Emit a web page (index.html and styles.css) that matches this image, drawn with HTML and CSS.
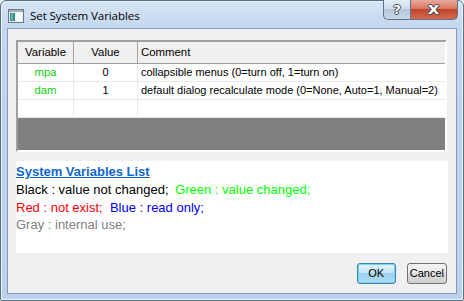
FILE: index.html
```html
<!DOCTYPE html>
<html>
<head>
<meta charset="utf-8">
<link rel="stylesheet" href="styles.css">
</head>
<body>
<div class="window">
  <div class="titlebar">
    <svg class="appicon" width="16" height="14" viewBox="0 0 16 14">
      <rect x="0.5" y="0.5" width="15" height="13" fill="#e8eef2" stroke="#6b7a86"/>
      <rect x="1" y="1" width="14" height="2" fill="#9fb0bd"/>
      <rect x="2" y="4" width="5" height="8" fill="#3f8f8a"/>
      <rect x="3" y="5" width="2" height="6" fill="#62b8b0"/>
      <rect x="8" y="4" width="6" height="8" fill="#f6f8fa"/>
    </svg>
    <span class="title">Set System Variables</span>
    <div class="capbtns">
      <div class="capbtn help"><span>?</span></div>
      <div class="capbtn close"><span>X</span></div>
    </div>
  </div>
  <div class="client">
    <div class="grid">
      <div class="row head">
        <div class="cell c">Variable</div>
        <div class="cell c">Value</div>
        <div class="cell l">Comment</div>
      </div>
      <div class="row">
        <div class="cell c green">mpa</div>
        <div class="cell c">0</div>
        <div class="cell l">collapsible menus (0=turn off, 1=turn on)</div>
      </div>
      <div class="row">
        <div class="cell c green">dam</div>
        <div class="cell c">1</div>
        <div class="cell l">default dialog recalculate mode (0=None, Auto=1, Manual=2)</div>
      </div>
      <div class="row">
        <div class="cell c"></div>
        <div class="cell c"></div>
        <div class="cell l"></div>
      </div>
      <div class="filler"></div>
    </div>
    <div class="info">
      <div class="info-title">System Variables List</div>
      <div class="line"><span class="k-black">Black : value not changed;</span>&nbsp;<span class="k-green">Green : value changed;</span></div>
      <div class="line"><span class="k-red">Red : not exist;</span>&nbsp; <span class="k-blue">Blue : read only;</span></div>
      <div class="line"><span class="k-gray">Gray : internal use;</span></div>
    </div>
    <div class="buttons">
      <div class="btn default">OK</div>
      <div class="btn">Cancel</div>
    </div>
  </div>
</div>
</body>
</html>
```
FILE: styles.css
```css
html, body {
  margin: 0;
  padding: 0;
  background: #ffffff;
}
.window {
  width: 464px;
  height: 301px;
  box-sizing: border-box;
  border: 1px solid #5a6f86;
  border-radius: 6px 6px 2px 2px;
  background: linear-gradient(#d7e5f5 0px, #c2d6ee 28px, #bcd2ec 100%);
  display: flex;
  flex-direction: column;
  box-shadow: inset 0 0 0 1px #eaf2fb;
}
.titlebar {
  height: 27px;
  display: flex;
  align-items: flex-start;
  position: relative;
}
.appicon {
  margin: 8px 0 0 7px;
}
.title {
  margin: 7px 0 0 6px;
  font-family: "Open Sans", "DejaVu Sans", sans-serif;
  font-size: 11.6px;
  line-height: 16px;
  color: #000;
  letter-spacing: -0.1px;
}
.capbtns {
  margin-left: auto;
  margin-right: 5px;
  display: flex;
  margin-top: -1px;
}
.capbtn {
  height: 20px;
  box-sizing: border-box;
  border: 1px solid #5f7389;
  border-top: none;
  display: flex;
  align-items: center;
  justify-content: center;
  font-family: "DejaVu Sans", sans-serif;
  font-weight: bold;
  color: #fff;
  font-size: 13px;
}
.capbtn span {
  text-shadow: -1px 0 #404a55, 1px 0 #404a55, 0 -1px #404a55, 0 1px #404a55;
}
.help {
  width: 27px;
  border-radius: 0 0 0 5px;
  border-right: none;
  background: linear-gradient(#e4edf6 0%, #cfdcea 45%, #b4c6da 50%, #c9d8e7 100%);
}
.close {
  width: 48px;
  border-radius: 0 0 5px 0;
  background: linear-gradient(#e9a99b 0%, #d8785f 45%, #c4442b 50%, #d46a4c 100%);
}
.close span {
  font-size: 12px;
  transform: scaleX(1.25);
}
.client {
  flex: 1;
  margin: 0 6px 6px 6px;
  border: 1px solid #8599b2;
  background: #f0f0f0;
  padding: 11px 8px 9px 8px;
  display: flex;
  flex-direction: column;
}
.grid {
  height: 112px;
  box-sizing: border-box;
  border: 2px solid;
  border-color: #a0a0a0 #ffffff #ffffff #a0a0a0;
  background: #ffffff;
  display: flex;
  flex-direction: column;
  width: 431px;
  font-family: "Liberation Sans", Arial, sans-serif;
  font-size: 11px;
}
.row {
  display: grid;
  grid-template-columns: 56px 64px 1fr;
  height: 18px;
  box-sizing: border-box;
  border-bottom: 1px solid #e8e8e8;
  flex: none;
}
.row.head {
  height: 22px;
  background: #f0f0f0;
  border-bottom: 1px solid #a0a0a0;
  font-size: 11.4px;
}
.cell {
  border-right: 1px solid #ececec;
  line-height: 17px;
  white-space: nowrap;
  overflow: hidden;
  color: #000;
}
.head .cell {
  border-right: 1px solid #a0a0a0;
  line-height: 21px;
}
.cell:last-child {
  border-right: none;
}
.cell.c {
  text-align: center;
}
.cell.l {
  padding-left: 3px;
}
.cell.green {
  color: #10d010;
  font-size: 11.4px;
}
.filler {
  flex: 1;
  background: #808080;
}
.info {
  margin-top: 9px;
  height: 92px;
  background: #ffffff;
  width: 432px;
  font-family: "Liberation Sans", Arial, sans-serif;
  font-size: 13px;
  line-height: 17.5px;
}
.info-title {
  margin-top: 2px;
  font-weight: bold;
  color: #1166cc;
  text-decoration: underline;
  font-size: 13px;
  line-height: 18px;
}
.line {
  white-space: nowrap;
  height: 17.5px;
}
.k-black { color: #000000; }
.k-green { color: #00ff00; margin-left: 3px; }
.k-red { color: #ff0000; }
.k-blue { color: #0000ff; }
.k-gray { color: #808080; }
.buttons {
  margin-top: 10px;
  display: flex;
  justify-content: flex-end;
  gap: 11px;
  padding-right: 1px;
}
.btn {
  height: 21px;
  box-sizing: border-box;
  border: 1px solid #707070;
  border-radius: 3px;
  background: linear-gradient(#f2f2f2 0%, #ebebeb 45%, #dddddd 50%, #cfcfcf 100%);
  font-family: "Liberation Sans", Arial, sans-serif;
  font-size: 11px;
  line-height: 19px;
  text-align: center;
  padding: 0 2px;
  min-width: 39px;
}
.btn.default {
  border-color: #3c7fb1;
  background: linear-gradient(#e5f4fc 0%, #c4e5f6 45%, #98d1ef 50%, #b3dcf2 100%);
  box-shadow: inset 0 0 0 1px #7ad3f5;
  width: 39px;
}
```
